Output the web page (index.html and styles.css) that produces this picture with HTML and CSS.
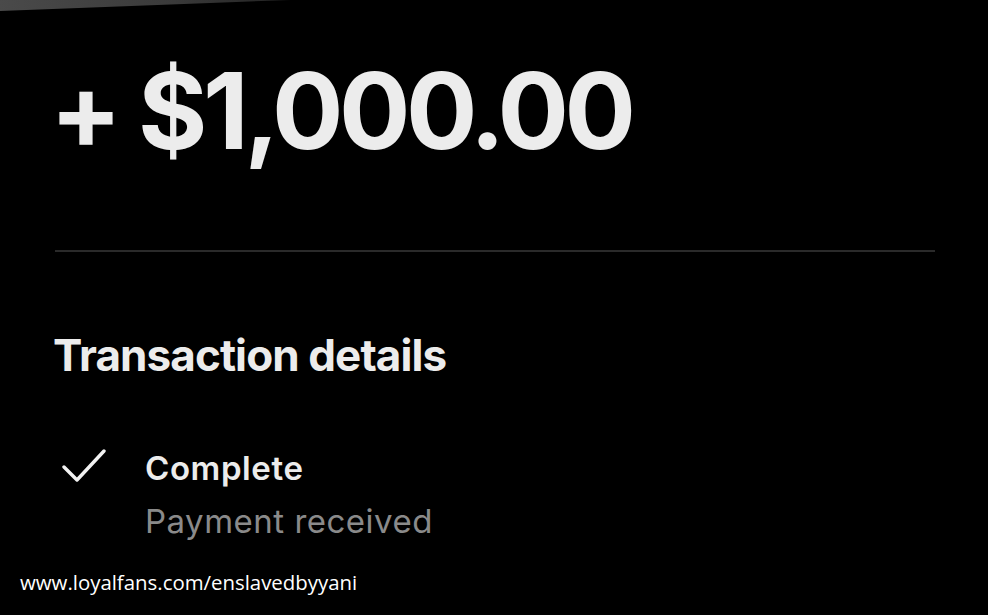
FILE: index.html
```html
<!DOCTYPE html>
<html>
<head>
<meta charset="utf-8">
<link rel="stylesheet" href="styles.css">
</head>
<body>
<div class="edge"></div>
<main class="screen">
  <h1 class="amount">+ $1,000.00</h1>
  <hr class="divider">
  <h2 class="section-title">Transaction details</h2>
  <div class="status-row">
    <svg class="check" width="44" height="36" viewBox="0 0 44 36" fill="none">
      <path d="M2 19 L15 32 L42 3" stroke="#f2f2f2" stroke-width="3.4" stroke-linecap="round" stroke-linejoin="round"/>
    </svg>
    <div class="status-text">
      <div class="status-title">Complete</div>
      <div class="status-sub">Payment received</div>
    </div>
  </div>
  <div class="watermark">www.loyalfans.com/enslavedbyyani</div>
</main>
</body>
</html>
```
FILE: styles.css
```css
html, body {
  margin: 0;
  padding: 0;
  background: #000;
  width: 988px;
  height: 615px;
  overflow: hidden;
}
.edge {
  position: absolute;
  left: 0;
  top: 0;
  width: 290px;
  height: 11px;
  background: linear-gradient(90deg, #4a4a4a, #3a3a3a 60%, #222);
  clip-path: polygon(0 0, 100% 0, 0 100%);
}
.screen {
  display: flex;
  flex-direction: column;
  padding: 0 53px 0 55px;
  font-family: Inter, "Noto Sans", sans-serif;
  color: #ececec;
}
.amount {
  margin: 53px 0 0 -5px;
  font-size: 106px;
  font-weight: 700;
  letter-spacing: -4.5px;
  line-height: 116px;
  color: #ececec;
}
.divider {
  margin: 81px 0 0 0;
  border: 0;
  height: 2px;
  background: #2a2a2a;
}
.section-title {
  margin: 77px 0 0 -2px;
  font-size: 44px;
  font-weight: 700;
  letter-spacing: -0.9px;
  line-height: 52px;
  color: #ececec;
}
.status-row {
  display: flex;
  align-items: flex-start;
  margin-top: 71px;
}
.check {
  margin: -4px 0 0 7px;
  flex: none;
}
.status-text {
  margin-left: 39px;
  display: flex;
  flex-direction: column;
}
.status-title {
  font-size: 33px;
  font-weight: 600;
  letter-spacing: 0.6px;
  line-height: 40px;
  margin-top: -4px;
  color: #ececec;
}
.status-sub {
  font-size: 33px;
  font-weight: 400;
  letter-spacing: 0.5px;
  line-height: 40px;
  margin-top: 13px;
  color: #8a8a8a;
}
.watermark {
  margin: 27px 0 0 -35px;
  font-family: "Open Sans", sans-serif;
  font-size: 20.4px;
  line-height: 28px;
  color: #ffffff;
}
```
